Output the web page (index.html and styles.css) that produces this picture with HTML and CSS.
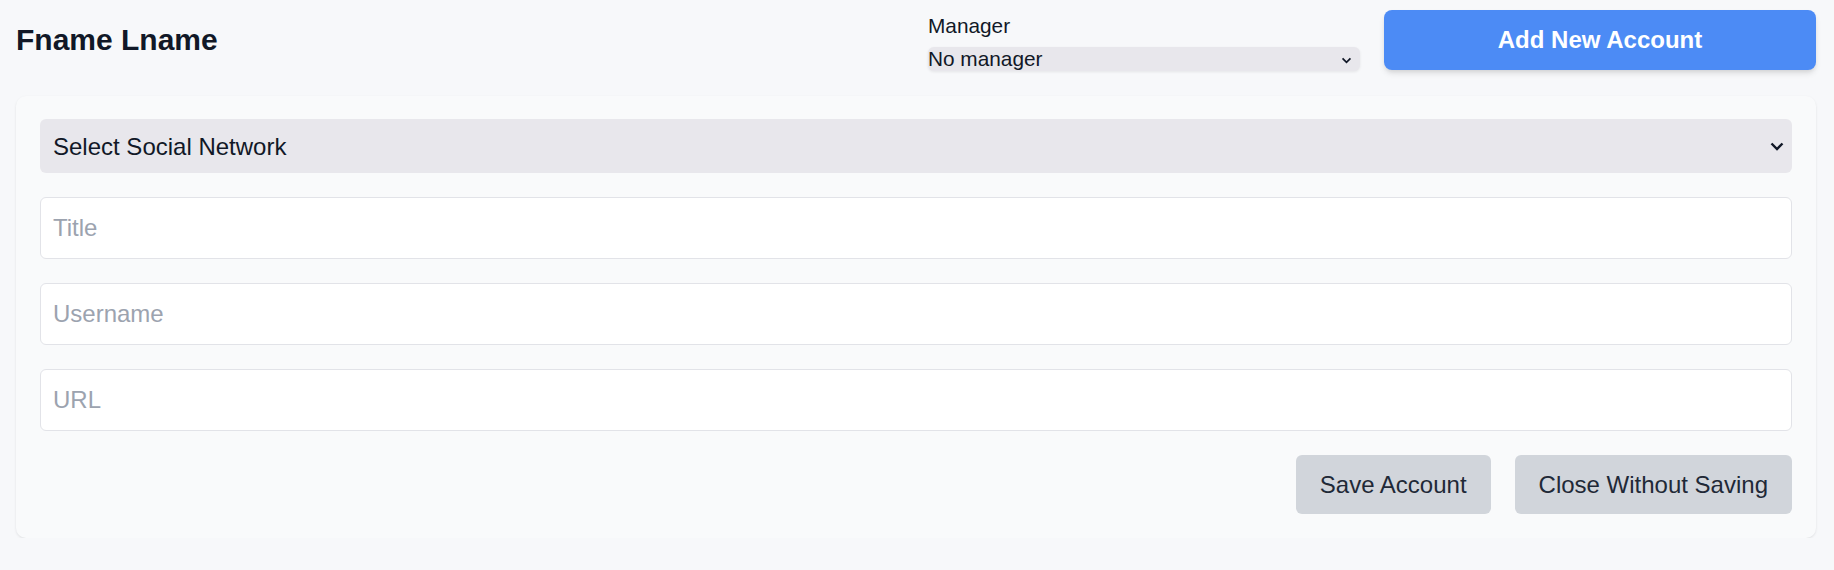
FILE: index.html
```html
<!DOCTYPE html>
<html lang="en">
<head>
<meta charset="utf-8">
<title>Accounts</title>
<link rel="stylesheet" href="styles.css">
</head>
<body>
<div class="page">
  <header class="header">
    <h1 class="title">Fname Lname</h1>
    <div class="manager">
      <label class="manager-label" for="mgr">Manager</label>
      <div class="select-wrap">
        <select id="mgr" class="manager-select">
          <option>No manager</option>
        </select>
        <svg class="chev chev-small" viewBox="0 0 12 8" aria-hidden="true"><path d="M1.5 1.5 L6 6 L10.5 1.5" fill="none" stroke="#111827" stroke-width="2"/></svg>
      </div>
    </div>
    <button class="btn-primary">Add New Account</button>
  </header>

  <section class="card">
    <div class="select-wrap">
      <select class="network-select">
        <option>Select Social Network</option>
      </select>
      <svg class="chev chev-big" viewBox="0 0 14 9" aria-hidden="true"><path d="M1.5 1.5 L7 7 L12.5 1.5" fill="none" stroke="#111827" stroke-width="2.4"/></svg>
    </div>
    <input class="field" type="text" placeholder="Title">
    <input class="field" type="text" placeholder="Username">
    <input class="field" type="text" placeholder="URL">
    <div class="actions">
      <button class="btn-gray">Save Account</button>
      <button class="btn-gray">Close Without Saving</button>
    </div>
  </section>
</div>
</body>
</html>
```

FILE: styles.css
```css
* { box-sizing: border-box; }

html, body {
  margin: 0;
  padding: 0;
  background: #f7f8fa;
  font-family: "Liberation Sans", Arial, sans-serif;
  color: #111827;
}

.page {
  padding: 10px 18px 0 16px;
}

.header {
  display: flex;
  align-items: center;
  height: 60px;
}

.title {
  margin: 0;
  font-size: 30px;
  line-height: 36px;
  font-weight: 700;
  color: #111827;
  flex: 1;
}

.manager {
  width: 432px;
  display: flex;
  flex-direction: column;
  margin-right: 24px;
  margin-top: 2px;
}

.manager-label {
  font-size: 20.8px;
  line-height: 28px;
  color: #111827;
}

.select-wrap {
  position: relative;
}

.manager-select {
  appearance: none;
  -webkit-appearance: none;
  width: 100%;
  height: 24px;
  margin-top: 7px;
  border: none;
  border-radius: 6px;
  background: #e8e7ec;
  box-shadow: 0 1px 3px rgba(0, 0, 0, 0.08);
  font-family: inherit;
  font-size: 20.8px;
  line-height: 24px;
  color: #111827;
  padding: 0;
}

.chev {
  position: absolute;
  pointer-events: none;
}

.chev-small {
  width: 11px;
  height: 7px;
  right: 8px;
  top: 17px;
}

.chev-big {
  width: 14px;
  height: 9px;
  right: 8px;
  top: 23px;
}

.btn-primary {
  width: 432px;
  height: 60px;
  border: none;
  border-radius: 8px;
  background: #4c8bf5;
  color: #ffffff;
  font-family: inherit;
  font-size: 24px;
  font-weight: 700;
  box-shadow: 0 4px 6px -1px rgba(0, 0, 0, 0.12), 0 2px 4px -1px rgba(0, 0, 0, 0.06);
}

.card {
  margin-top: 26px;
  background: #f9fafb;
  border-radius: 10px;
  box-shadow: 0 1px 3px rgba(0, 0, 0, 0.07), 0 1px 2px rgba(0, 0, 0, 0.03);
  padding: 23px 24px 24px 24px;
  display: flex;
  flex-direction: column;
  gap: 24px;
}

.network-select {
  appearance: none;
  -webkit-appearance: none;
  width: 100%;
  height: 54px;
  border: none;
  border-radius: 6px;
  background: #e8e7ec;
  font-family: inherit;
  font-size: 24px;
  color: #111827;
  padding: 0 0 0 13px;
}

.field {
  width: 100%;
  height: 62px;
  border: 1px solid #e2e3e8;
  border-radius: 6px;
  background: #ffffff;
  font-family: inherit;
  font-size: 24px;
  color: #111827;
  padding: 0 12px;
}

.field::placeholder {
  color: #9ca3af;
}

.actions {
  display: flex;
  justify-content: flex-end;
  gap: 24px;
}

.btn-gray {
  height: 59px;
  padding: 0 24px;
  border: none;
  border-radius: 6px;
  background: #d1d5db;
  color: #1f2937;
  font-family: inherit;
  font-size: 24px;
}
```
